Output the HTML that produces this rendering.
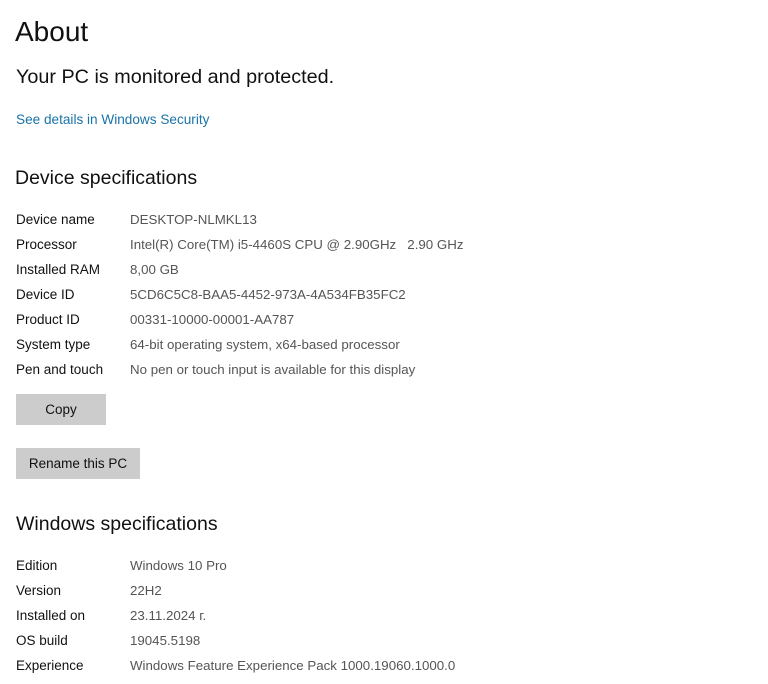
<!DOCTYPE html>
<html><head><meta charset="utf-8"><style>
body{margin:0;width:768px;height:684px;background:#fff;font-family:"Liberation Sans",sans-serif;color:#000;position:relative;overflow:hidden}
.a{position:absolute;white-space:nowrap}
.l{font-size:13.5px;left:16px;color:#111}
.v{font-size:13.3px;left:130px;color:#555}
.btn{position:absolute;background:#ccc;font-size:13.5px;color:#111;text-align:center;line-height:31px;height:31px}
</style></head><body>
<div class="a" style="left:15px;top:16px;font-size:28px;color:#111">About</div>
<div class="a" style="left:16px;top:66px;font-size:19.8px;color:#111">Your PC is monitored and protected.</div>
<div class="a" style="left:16px;top:112px;font-size:13.6px;color:#1a73a8">See details in Windows Security</div>
<div class="a" style="left:15px;top:167px;font-size:19.5px;color:#111">Device specifications</div>
<div class="a l" style="top:212px">Device name</div><div class="a v" style="top:212px">DESKTOP-NLMKL13</div>
<div class="a l" style="top:237px">Processor</div><div class="a v" style="top:237px">Intel(R) Core(TM) i5-4460S CPU @ 2.90GHz&nbsp;&nbsp;&nbsp;2.90 GHz</div>
<div class="a l" style="top:262px">Installed RAM</div><div class="a v" style="top:262px">8,00 GB</div>
<div class="a l" style="top:287px">Device ID</div><div class="a v" style="top:287px">5CD6C5C8-BAA5-4452-973A-4A534FB35FC2</div>
<div class="a l" style="top:312px">Product ID</div><div class="a v" style="top:312px">00331-10000-00001-AA787</div>
<div class="a l" style="top:337px">System type</div><div class="a v" style="top:337px">64-bit operating system, x64-based processor</div>
<div class="a l" style="top:362px">Pen and touch</div><div class="a v" style="top:362px">No pen or touch input is available for this display</div>
<div class="btn" style="left:16px;top:394px;width:90px">Copy</div>
<div class="btn" style="left:16px;top:448px;width:124px">Rename this PC</div>
<div class="a" style="left:16px;top:513px;font-size:19.5px;color:#111">Windows specifications</div>
<div class="a l" style="top:558px">Edition</div><div class="a v" style="top:558px">Windows 10 Pro</div>
<div class="a l" style="top:583px">Version</div><div class="a v" style="top:583px">22H2</div>
<div class="a l" style="top:608px">Installed on</div><div class="a v" style="top:608px">23.11.2024 г.</div>
<div class="a l" style="top:633px">OS build</div><div class="a v" style="top:633px">19045.5198</div>
<div class="a l" style="top:658px">Experience</div><div class="a v" style="top:658px">Windows Feature Experience Pack 1000.19060.1000.0</div>
</body></html>
